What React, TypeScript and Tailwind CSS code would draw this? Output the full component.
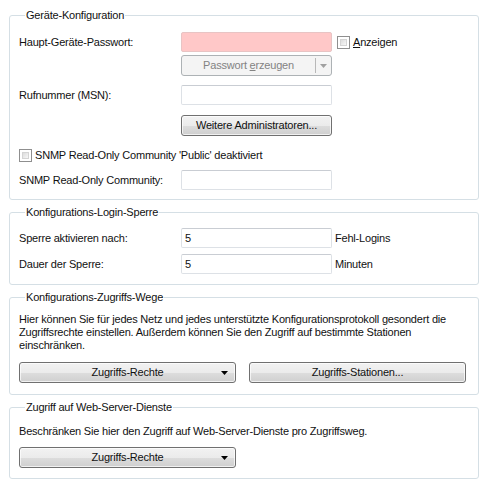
import type { ReactNode } from "react";

const font = "font-['Liberation_Sans',Arial,sans-serif] text-[11px] leading-[13px] tracking-[-0.2px] text-[#111]";

const btn =
  "flex h-[21px] items-center justify-center rounded-[3px] border border-[#707070] bg-[linear-gradient(180deg,#f2f2f2_0%,#ebebeb_50%,#dddddd_51%,#cfcfcf_100%)] shadow-[inset_0_0_0_1px_rgba(255,255,255,0.7)]";

const input = "h-[20px] w-[151px] rounded-[2px] border border-[#dde1e6] border-t-[#c9cdd3] bg-white px-[3px]";

function GroupBox({ title, className, children }: { title: string; className?: string; children: ReactNode }) {
  return (
    <fieldset className={`rounded-[3px] border border-[#d5dfe5] px-[9px] ${className ?? ""}`}>
      <legend className="ml-[6px] px-[1px]">{title}</legend>
      {children}
    </fieldset>
  );
}

function CheckBox() {
  return (
    <span className="inline-block size-[13px] shrink-0 border border-[#8f8f8f] bg-white p-[2px]">
      <span className="block size-full border border-[#d4d4d4] bg-[linear-gradient(135deg,#dcdcdc,#f7f7f7)]" />
    </span>
  );
}

function ArrowDown({ color = "#000" }: { color?: string }) {
  return (
    <svg width="7" height="4" viewBox="0 0 7 4">
      <path d="M0 0h7L3.5 4z" fill={color} />
    </svg>
  );
}

function DropButton({ label }: { label: string }) {
  return (
    <div className={`${btn} relative w-[217px]`}>
      <span>{label}</span>
      <span className="absolute right-[7px] top-[8px] flex">
        <ArrowDown />
      </span>
    </div>
  );
}

export default function App() {
  return (
    <div className={`${font} w-[487px] bg-white pl-[9px] pt-[9px]`}>
      <div className="flex w-[470px] flex-col">
        <GroupBox title="Geräte-Konfiguration" className="pb-[9px]">
          <div className="mt-[10px] flex h-[20px] items-center">
            <span className="w-[162px] shrink-0">Haupt-Geräte-Passwort:</span>
            <div className="h-[20px] w-[151px] rounded-[2px] border border-[#e8c4c4] bg-[#ffc8c8]" />
            <span className="ml-[5px] flex items-center gap-[3px]">
              <CheckBox />
              <span>
                <span className="underline">A</span>nzeigen
              </span>
            </span>
          </div>
          <div className="mt-[3px] flex">
            <div className="ml-[162px] flex h-[21px] w-[151px] items-center rounded-[3px] border border-[#adb2b5] bg-[#f4f4f4] text-[#838383]">
              <span className="flex-1 text-center">
                Passwort <span className="underline">e</span>rzeugen
              </span>
              <span className="h-[15px] w-px bg-[#b8b8b8]" />
              <span className="flex w-[15px] justify-center">
                <ArrowDown color="#a0a0a0" />
              </span>
            </div>
          </div>
          <div className="mt-[9px] flex h-[20px] items-center">
            <span className="w-[162px] shrink-0">Rufnummer (MSN):</span>
            <div className={input} />
          </div>
          <div className="mt-[10px] flex">
            <div className={`${btn} ml-[162px] w-[151px]`}>Weitere Administratoren...</div>
          </div>
          <div className="mt-[13px] flex h-[13px] items-center gap-[3px]">
            <CheckBox />
            <span>SNMP Read-Only Community 'Public' deaktiviert</span>
          </div>
          <div className="mt-[8px] flex h-[20px] items-center">
            <span className="w-[162px] shrink-0">SNMP Read-Only Community:</span>
            <div className={input} />
          </div>
        </GroupBox>

        <GroupBox title="Konfigurations-Login-Sperre" className="mt-[6px] pb-[10px]">
          <div className="mt-[9px] flex h-[20px] items-center">
            <span className="w-[162px] shrink-0">Sperre aktivieren nach:</span>
            <div className={`${input} flex items-center`}>5</div>
            <span className="ml-[3px]">Fehl-Logins</span>
          </div>
          <div className="mt-[6px] flex h-[20px] items-center">
            <span className="w-[162px] shrink-0">Dauer der Sperre:</span>
            <div className={`${input} flex items-center`}>5</div>
            <span className="ml-[3px]">Minuten</span>
          </div>
        </GroupBox>

        <GroupBox title="Konfigurations-Zugriffs-Wege" className="mt-[6px] pb-[11px]">
          <p className="mt-[9px]">
            Hier können Sie für jedes Netz und jedes unterstützte Konfigurationsprotokoll gesondert die
            <br />
            Zugriffsrechte einstellen. Außerdem können Sie den Zugriff auf bestimmte Stationen
            <br />
            einschränken.
          </p>
          <div className="mt-[10px] flex gap-[13px]">
            <DropButton label="Zugriffs-Rechte" />
            <div className={`${btn} w-[217px]`}>Zugriffs-Stationen...</div>
          </div>
        </GroupBox>

        <GroupBox title="Zugriff auf Web-Server-Dienste" className="mt-[6px] pb-[10px]">
          <p className="mt-[11px]">Beschränken Sie hier den Zugriff auf Web-Server-Dienste pro Zugriffsweg.</p>
          <div className="mt-[9px] flex">
            <DropButton label="Zugriffs-Rechte" />
          </div>
        </GroupBox>
      </div>
    </div>
  );
}
